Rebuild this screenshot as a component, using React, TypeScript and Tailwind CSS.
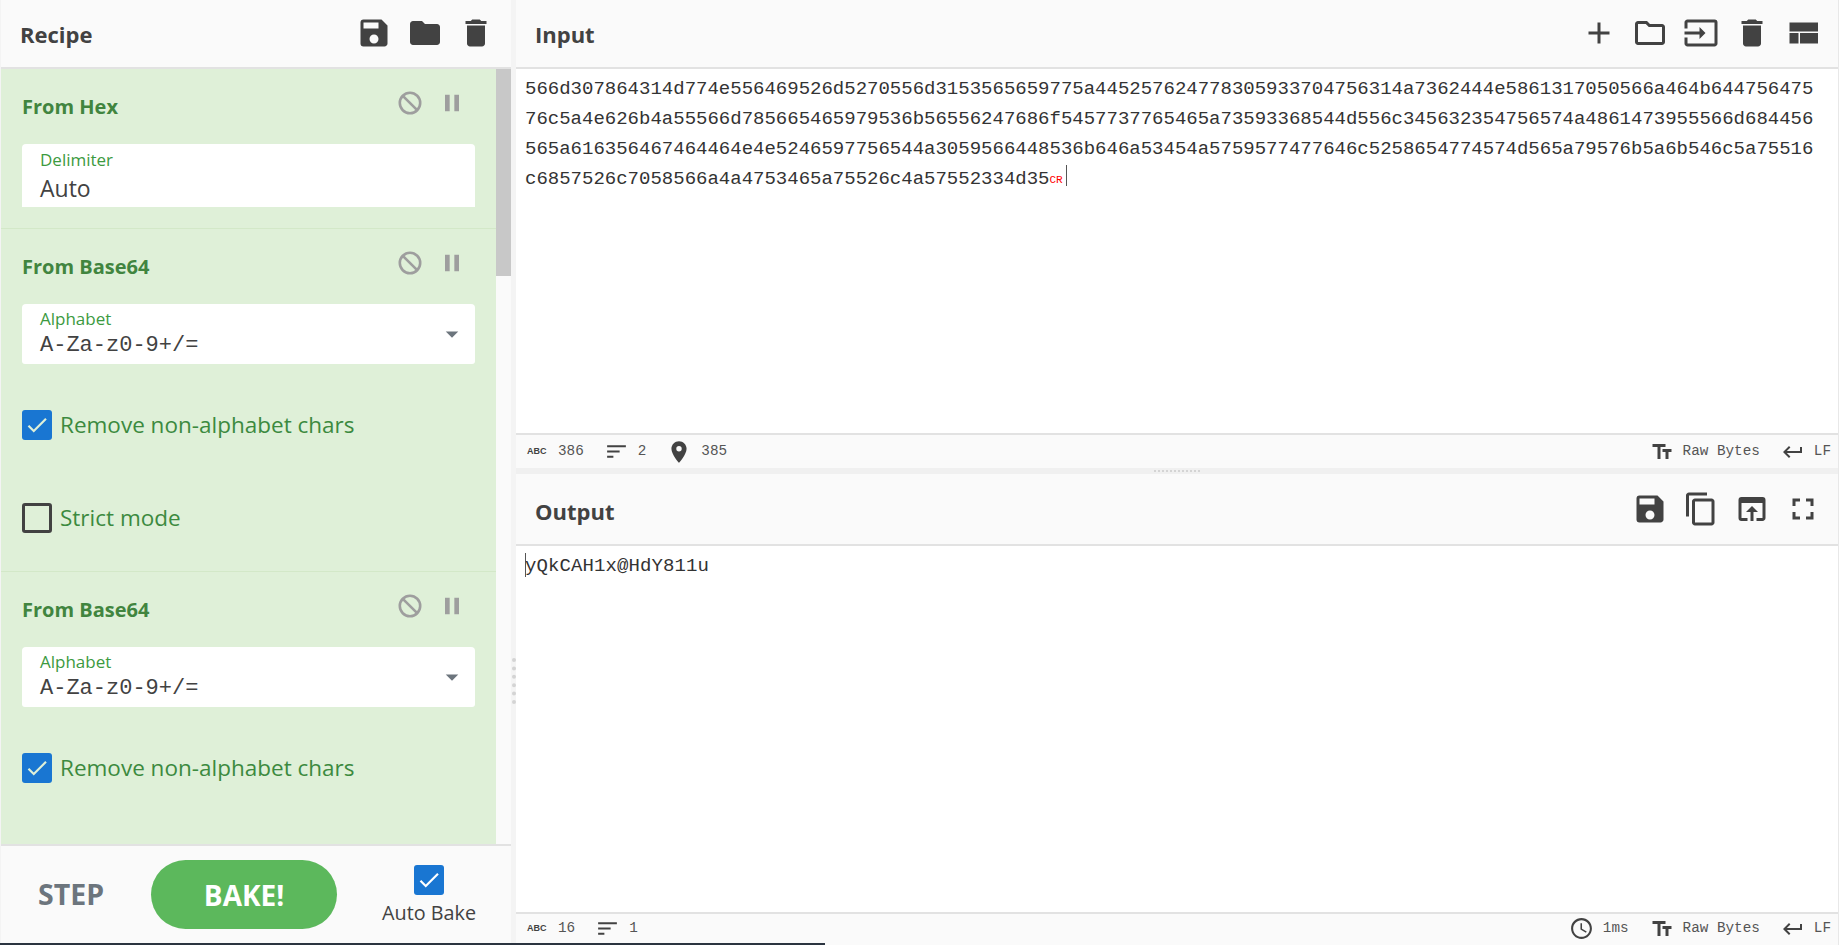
import {
  MdAccessTime,
  MdAdd,
  MdArrowDropDown,
  MdCheck,
  MdContentCopy,
  MdDelete,
  MdFolder,
  MdFullscreen,
  MdInput,
  MdKeyboardReturn,
  MdOpenInBrowser,
  MdOutlineFolder,
  MdPause,
  MdPlace,
  MdSave,
  MdSort,
  MdTextFields,
} from "react-icons/md";
import type { IconType } from "react-icons";
import type { ReactNode } from "react";

const sans = "font-['Open_Sans',sans-serif]";
const mono = "font-['Liberation_Mono',monospace]";

const inputLines = [
  "566d307864314d774e556469526d5270556d3153565659775a445257624778305933704756314a7362444e5861317050566a464b644756475",
  "76c5a4e626b4a55566d785665465979536b56556247686f5457737765465a73593368544d556c345632354756574a4861473955566d684456",
  "565a61635646746446 4e4e524659775 6544a3059566448536b646a53454a5759577477646c5258654774574d565a79576b5a6b546c5a75516".replace(/ /g, ""),
];

function LayoutIcon({ size }: { size: number }) {
  return (
    <svg width={size} height={size} viewBox="0 0 24 24" fill="currentColor">
      <path d="M3 19h6v-7H3v7zm7 0h12v-7H10v7zM3 5v6h19V5H3z" />
    </svg>
  );
}

function DisableIcon() {
  return (
    <svg width={28} height={28} viewBox="0 0 28 28" fill="none" stroke="currentColor" strokeWidth={2.6}>
      <circle cx={14} cy={14} r={10.2} />
      <path d="M6.8 6.8 21.2 21.2" />
    </svg>
  );
}

function ToolIcon({ icon: Icon }: { icon: IconType }) {
  return (
    <span className="flex w-[51px] justify-center text-[#424242]">
      <Icon size={36} />
    </span>
  );
}

function PanelHeader({
  title,
  icons,
  height,
  titleClass,
  iconClass,
}: {
  title: string;
  icons: IconType[];
  height: string;
  titleClass: string;
  iconClass: string;
}) {
  return (
    <div className={`${height} flex shrink-0 items-center justify-between border-b-2 border-[#e2e2e2] bg-[#fafafa] pl-[19px] pr-[10px]`}>
      <span className={`${sans} ${titleClass} text-[22px] font-bold text-[#424242]`}>{title}</span>
      <div className={`${iconClass} flex items-center`}>
        {icons.map((icon, i) => (
          <ToolIcon key={i} icon={icon} />
        ))}
      </div>
    </div>
  );
}

function StatItem({ icon: Icon, children, size = 24 }: { icon: IconType; children: string; size?: number }) {
  return (
    <span className={`${mono} flex items-center gap-[9px] text-[14.3px] text-[#555]`}>
      <Icon size={size} className="text-[#424242]" />
      {children}
    </span>
  );
}

function AbcStat({ value }: { value: string }) {
  return (
    <span className={`${mono} flex items-center gap-[11px] text-[14.3px] text-[#555]`}>
      <span className="w-[20px] font-['Liberation_Sans',sans-serif] text-[9px] leading-none font-bold text-[#424242]">ABC</span>
      {value}
    </span>
  );
}

function StatusBar({ left, right, height }: { left: ReactNode; right: ReactNode; height: string }) {
  return (
    <div className={`${height} flex shrink-0 items-center justify-between border-t-2 border-[#e2e2e2] bg-[#fafafa] pl-[11px] pr-[7px]`}>
      <div className="flex items-center gap-[20px]">{left}</div>
      <div className="flex items-center gap-[21px]">{right}</div>
    </div>
  );
}

function Checkbox({ checked, label }: { checked: boolean; label?: string }) {
  return (
    <div className="flex items-center gap-2">
      {checked ? (
        <span className="flex h-[30px] w-[30px] items-center justify-center rounded-[3px] bg-[#1976d2] text-[#dff0d8]">
          <MdCheck size={26} />
        </span>
      ) : (
        <span className="h-[30px] w-[30px] rounded-[3px] border-[3px] border-[#424242]" />
      )}
      {label && <span className={`${sans} text-[22.5px] text-[#3c8a3f]`}>{label}</span>}
    </div>
  );
}

function OpHeader({ title }: { title: string }) {
  return (
    <div className="flex h-[28px] items-start justify-between pr-[9px]">
      <span className={`${sans} text-[20px] leading-[28px] font-bold text-[#41853f]`}>{title}</span>
      <div className="-mt-[4px] flex items-center gap-[14px] text-[#9e9e9e]">
        <DisableIcon />
        <MdPause size={28} />
      </div>
    </div>
  );
}

function FromBase64({ strictLabel }: { strictLabel?: string }) {
  return (
    <div className="border-b border-[#d3e8c8] pl-[21px] pr-[21px] pt-[24px]">
      <OpHeader title="From Base64" />
      <div className="mt-[23px] flex h-[60px] items-center justify-between rounded-t-[4px] rounded-b-[3px] bg-white pl-[18px] pr-[8px]">
        <div className="self-start pt-[5px]">
          <div className={`${sans} text-[17px] leading-[20px] text-[#3c9a3f]`}>Alphabet</div>
          <div className={`${mono} mt-[2px] text-[22px] leading-[30px] text-[#424242]`}>A-Za-z0-9+/=</div>
        </div>
        <MdArrowDropDown size={30} className="text-[#6c757d]" />
      </div>
      <div className="mt-[44px] h-[93px]">
        <Checkbox checked label="Remove non-alphabet chars" />
      </div>
      <div className="h-[70px]">
        <Checkbox checked={false} label={strictLabel} />
      </div>
    </div>
  );
}

export default function App() {
  return (
    <div className="relative flex h-screen w-screen overflow-hidden bg-white">
      {/* Recipe column */}
      <div className="flex h-full w-[511px] shrink-0 flex-col border-l border-[#f4f4f4]">
        <PanelHeader
          title="Recipe"
          icons={[MdSave, MdFolder, MdDelete]}
          height="h-[69px]"
          titleClass="mt-[2px]"
          iconClass="-mt-[2px]"
        />
        <div className="flex min-h-0 flex-1">
          <div className="min-w-0 flex-1 overflow-hidden bg-[#dff0d8]">
            <div className="h-[160px] border-b border-[#d3e8c8] pl-[21px] pr-[21px] pt-[24px]">
              <OpHeader title="From Hex" />
              <div className="mt-[23px] h-[63px] rounded-t-[4px] bg-white pl-[18px] pt-[5px]">
                <div className={`${sans} text-[17px] leading-[22px] text-[#3c9a3f]`}>Delimiter</div>
                <div className={`${sans} text-[23px] leading-[34px] text-[#424242]`}>Auto</div>
              </div>
            </div>
            <FromBase64 strictLabel="Strict mode" />
            <FromBase64 />
          </div>
          <div className="w-[15px] shrink-0 bg-[#fafafa]">
            <div className="h-[207px] bg-[#c8c8c8]" />
          </div>
        </div>
        <div className="flex h-[101px] shrink-0 items-center border-t-2 border-[#e2e2e2] bg-[#fafafa] pb-[2px]">
          <span className={`${sans} ml-[37px] text-[28.5px] font-bold text-[#6c757d]`}>STEP</span>
          <span className={`${sans} ml-[47px] flex h-[69px] w-[186px] items-center justify-center rounded-full bg-[#5cb85c] text-[28px] font-bold text-white`}>
            BAKE!
          </span>
          <div className="ml-[45px] flex flex-col items-center pt-[1px]">
            <span className="flex h-[30px] w-[30px] items-center justify-center rounded-[3px] bg-[#1976d2] text-white">
              <MdCheck size={26} />
            </span>
            <span className={`${sans} mt-[4px] text-[19.8px] leading-[27px] text-[#424242]`}>Auto Bake</span>
          </div>
        </div>
      </div>

      {/* Resize handle */}
      <div className="h-full w-[5px] shrink-0 bg-[#f4f4f4] pt-[658px] pl-[1px]">
        <div className="h-[46px] border-l-4 border-dotted border-[#d4d4d4]" />
      </div>

      {/* Input and output */}
      <div className="mr-[3px] flex h-full min-w-0 flex-1 flex-col border-r border-[#e8e8e8]">
        <div className="flex h-[468px] shrink-0 flex-col">
          <PanelHeader
            title="Input"
            icons={[MdAdd, MdOutlineFolder, MdInput, MdDelete, LayoutIcon]}
            height="h-[69px]"
            titleClass="mt-[2px]"
            iconClass="-mt-[2px]"
          />
          <div className={`${mono} min-h-0 flex-1 pl-[9px] pt-[5px] text-[19px] leading-[30px] text-[#333]`}>
            {inputLines.map((line) => (
              <div key={line}>{line}</div>
            ))}
            <div className="flex h-[30px] items-center">
              c6857526c7058566a4a4753465a75526c4a57552334d35
              <span className="mt-[3px] text-[11px] leading-none text-[#f00]">CR</span>
              <span className="ml-[3px] mt-[1px] h-[21px] w-px self-start bg-[#555]" />
            </div>
          </div>
          <StatusBar
            height="h-[35px]"
            left={
              <>
                <AbcStat value="386" />
                <StatItem icon={MdSort} size={25}>2</StatItem>
                <StatItem icon={MdPlace} size={26}>385</StatItem>
              </>
            }
            right={
              <>
                <StatItem icon={MdTextFields}>Raw Bytes</StatItem>
                <StatItem icon={MdKeyboardReturn}>LF</StatItem>
              </>
            }
          />
        </div>
        <div className="flex h-[6px] shrink-0 items-center justify-center bg-[#f0f0f0]">
          <div className="w-[46px] border-t-2 border-dotted border-[#d4d4d4]" />
        </div>
        <div className="flex min-h-0 flex-1 flex-col">
          <PanelHeader
            title="Output"
            icons={[MdSave, MdContentCopy, MdOpenInBrowser, MdFullscreen]}
            height="h-[72px]"
            titleClass="mt-[4px]"
            iconClass=""
          />
          <div className={`${mono} flex min-h-0 flex-1 items-start pl-[9px] pt-[5px] text-[19px] leading-[30px] tracking-[0.1px] text-[#333]`}>
            <span className="mt-[2px] -mr-px h-[24px] w-px bg-[#555]" />
            yQkCAH1x@HdY811u
          </div>
          <StatusBar
            height="h-[33px] pb-[2px]"
            left={
              <>
                <AbcStat value="16" />
                <StatItem icon={MdSort} size={25}>1</StatItem>
              </>
            }
            right={
              <>
                <StatItem icon={MdAccessTime} size={25}>1ms</StatItem>
                <StatItem icon={MdTextFields}>Raw Bytes</StatItem>
                <StatItem icon={MdKeyboardReturn}>LF</StatItem>
              </>
            }
          />
        </div>
      </div>

      {/* Dark sliver along the bottom edge of the capture */}
      <div className="absolute bottom-0 left-0 h-[2px] w-[825px] bg-[#2b3440]" />
    </div>
  );
}
